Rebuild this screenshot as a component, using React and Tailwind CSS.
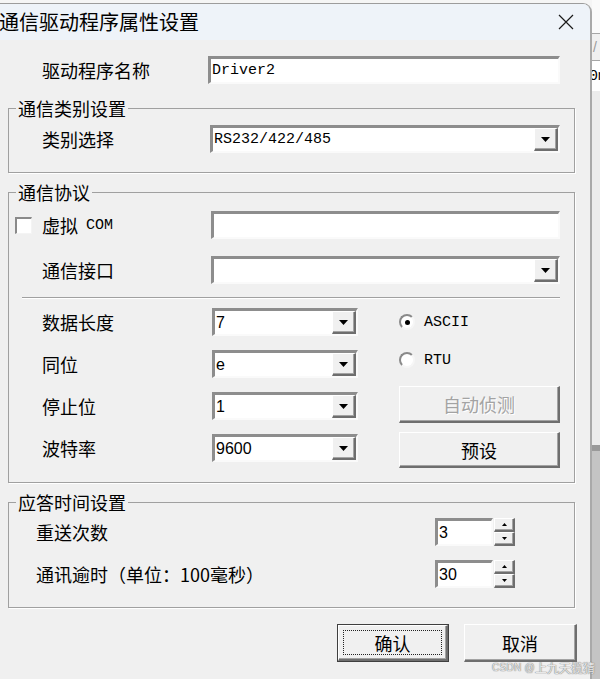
import React from "react";

const sunken =
  "bg-white border-t-[3px] border-l-[3px] border-r-2 border-b-2 border-t-[#8d8d8d] border-l-[#8d8d8d] border-r-[#fafafa] border-b-[#fafafa]";
const raised =
  "bg-[#f0f0f0] border-t border-l border-r-2 border-b-2 border-t-white border-l-white border-r-[#6e6e6e] border-b-[#6e6e6e] shadow-[inset_-1px_-1px_0_#a3a3a3]";
const mono = "font-['Liberation_Mono',monospace] text-[15px] leading-none";
const sans = "font-['Liberation_Sans',Arial,sans-serif] text-[16px] leading-none";

function Tri({ up = false, w = 9, h = 5 }) {
  return (
    <svg width={w} height={h} viewBox={`0 0 ${w} ${h}`} className="block">
      <polygon
        points={up ? `0,${h} ${w},${h} ${w / 2},0` : `0,0 ${w},0 ${w / 2},${h}`}
        fill="#000"
      />
    </svg>
  );
}

function Combo({ value = "", w, isMono = false }) {
  return (
    <div className={`${sunken} ${w} h-[28px] flex`}>
      <div className={`flex-1 flex items-center pl-[1px] ${isMono ? mono : sans}`}>{value}</div>
      <div className={`${raised} w-[24px] h-full flex items-center justify-center`}>
        <Tri />
      </div>
    </div>
  );
}

function Radio({ checked }) {
  return (
    <div className="w-[16px] h-[16px] rounded-full bg-white border-2 border-t-[#8a8a8a] border-l-[#8a8a8a] border-r-[#f6f6f6] border-b-[#f6f6f6] flex items-center justify-center shrink-0">
      {checked && <div className="w-[5px] h-[5px] rounded-full bg-black" />}
    </div>
  );
}

function Spin({ value }) {
  return (
    <div className="flex h-[28px]">
      <div className={`${sunken} w-[58px] h-full flex items-center pl-[1px] ${sans}`}>{value}</div>
      <div className="ml-[1px] w-[21px] h-full flex flex-col">
        <div className={`${raised} h-[14px] flex items-center justify-center`}>
          <Tri up w={5} h={3} />
        </div>
        <div className={`${raised} h-[14px] flex items-center justify-center`}>
          <Tri w={5} h={3} />
        </div>
      </div>
    </div>
  );
}

const fieldset =
  "w-[567px] border border-[#a0a0a0] shadow-[1px_1px_0_#ffffff]";
const legend = "ml-[7px] px-[2px] text-[18px] leading-[20px]";
const label = "text-[18px] leading-none";

export default function App() {
  return (
    <div className="w-[600px] h-[679px] flex overflow-hidden bg-[#f5f5f5] font-['Noto_Sans_CJK_SC',sans-serif] text-black relative">
      {/* dialog */}
      <div className="w-[592px] h-[676px] mt-[3px] shrink-0 flex flex-col bg-[#f0f0f0] border-t border-r-2 border-t-[#9c9c9c] border-r-[#a9a9a9] rounded-tr-[9px] overflow-hidden">
        {/* title bar */}
        <div className="h-[36px] bg-[#eef3f9] flex items-center">
          <span className="ml-[-1px] text-[20px] leading-none">通信驱动程序属性设置</span>
          <div className="flex-1" />
          <svg width="16" height="16" viewBox="0 0 16 16" className="mr-[16px]">
            <path d="M1 1 L15 15 M15 1 L1 15" stroke="#1a1a1a" strokeWidth="1.2" fill="none" />
          </svg>
        </div>

        {/* body */}
        <div className="flex flex-col pl-[8px]">
          {/* driver name */}
          <div className="mt-[16px] flex items-center h-[28px]">
            <span className={`${label} ml-[34px] w-[166px]`}>驱动程序名称</span>
            <div className={`${sunken} w-[352px] h-[28px] flex items-center pl-[1px] ${mono}`}>Driver2</div>
          </div>

          {/* group 1 */}
          <fieldset className={`${fieldset} mt-[14px] pb-[19px]`}>
            <legend className={legend}>通信类别设置</legend>
            <div className="mt-[7px] flex items-center h-[28px]">
              <span className={`${label} ml-[33px] w-[168px]`}>类别选择</span>
              <Combo value="RS232/422/485" w="w-[350px]" isMono />
            </div>
          </fieldset>

          {/* group 2 */}
          <fieldset className={`${fieldset} mt-[9px] pb-[14px]`}>
            <legend className={legend}>通信协议</legend>
            <div className="mt-[9px] flex items-center h-[28px]">
              <div className="w-[202px] flex items-center">
                <div className="ml-[6px] w-[17px] h-[17px] bg-white border-t-2 border-l-2 border-r border-b border-t-[#8a8a8a] border-l-[#8a8a8a] border-r-[#f4f4f4] border-b-[#f4f4f4]" />
                <span className={`${label} ml-[10px]`}>虚拟</span>
                <span className={`${mono} ml-[8px]`}>COM</span>
              </div>
              <div className={`${sunken} w-[349px] h-[28px]`} />
            </div>
            <div className="mt-[17px] flex items-center h-[28px]">
              <span className={`${label} ml-[33px] w-[169px]`}>通信接口</span>
              <Combo value="" w="w-[349px]" />
            </div>
            <div className="mt-[13px] ml-[13px] w-[538px] h-[2px] border-t border-b border-t-[#a0a0a0] border-b-white" />
            <div className="mt-[9px] flex">
              <div className="flex flex-col gap-[14px]">
                {[
                  ["数据长度", "7"],
                  ["同位", "e"],
                  ["停止位", "1"],
                  ["波特率", "9600"],
                ].map(([l, v]) => (
                  <div key={l} className="flex items-center h-[28px]">
                    <span className={`${label} ml-[33px] w-[170px]`}>{l}</span>
                    <Combo value={v} w="w-[146px]" />
                  </div>
                ))}
              </div>
              <div className="ml-[41px] w-[161px] flex flex-col">
                <div className="h-[28px] flex items-center">
                  <Radio checked />
                  <span className={`${mono} ml-[9px]`}>ASCII</span>
                </div>
                <div className="mt-[10px] h-[28px] flex items-center">
                  <Radio />
                  <span className={`${mono} ml-[9px]`}>RTU</span>
                </div>
                <div className={`${raised} mt-[12px] h-[37px] flex items-center justify-center`}>
                  <span className="text-[18px] leading-none text-[#a3a3a3] [text-shadow:1px_1px_0_#ffffff]">自动侦测</span>
                </div>
                <div className={`${raised} mt-[9px] h-[36px] flex items-center justify-center`}>
                  <span className="text-[18px] leading-none">预设</span>
                </div>
              </div>
            </div>
          </fieldset>

          {/* group 3 */}
          <fieldset className={`${fieldset} mt-[9px] pb-[19px]`}>
            <legend className={legend}>应答时间设置</legend>
            <div className="mt-[6px] flex items-center h-[28px]">
              <span className={`${label} ml-[27px] w-[399px]`}>重送次数</span>
              <Spin value="3" />
            </div>
            <div className="mt-[14px] flex items-center h-[28px]">
              <span className={`${label} ml-[27px] w-[399px]`}>通讯逾时（单位：100毫秒）</span>
              <Spin value="30" />
            </div>
          </fieldset>

          {/* buttons */}
          <div className="mt-[16px] flex h-[38px]">
            <div className="ml-[329px] w-[112px] h-full border border-[#3f3f3f] flex">
              <div className={`${raised} flex-1 flex p-[4px]`}>
                <div className="flex-1 border border-dotted border-[#222] flex items-center justify-center">
                  <span className="text-[18px] leading-none">确认</span>
                </div>
              </div>
            </div>
            <div className={`${raised} ml-[15px] w-[113px] h-full flex items-center justify-center`}>
              <span className="text-[18px] leading-none">取消</span>
            </div>
          </div>
        </div>
      </div>

      {/* background window strip */}
      <div className="flex-1 flex flex-col overflow-hidden">
        <div className="h-[33px] shrink-0 bg-[#fafafa]" />
        <div className="h-[28px] shrink-0 border-t border-b border-[#a6a6a6] bg-[#f0f0f0] flex items-center pl-[1px] text-[#9a9a9a] text-[14px] leading-none font-['Liberation_Sans',sans-serif]">
          /
        </div>
        <div className="h-[30px] shrink-0 bg-white flex items-center overflow-hidden">
          <span className={`${mono} -ml-[3px] whitespace-nowrap`}>0m</span>
        </div>
        <div className="h-[354px] shrink-0 bg-[#ececec]" />
        <div className="h-[6px] shrink-0 bg-[#9a9a9a]" />
        <div className="flex-1 bg-[#c4c4c4]" />
      </div>

      {/* watermark */}
      <span className="absolute left-[492px] top-[661px] flex items-center leading-[13px] whitespace-nowrap text-[#e8e8e8] [text-shadow:0_0_1px_#7a7a7a,0_0_1px_#7a7a7a]">
        <span className="font-['Liberation_Sans',sans-serif] text-[10px] tracking-[0.3px]">CSDN @</span>
        <span className="text-[12px]">上九天揽猜</span>
      </span>
    </div>
  );
}
